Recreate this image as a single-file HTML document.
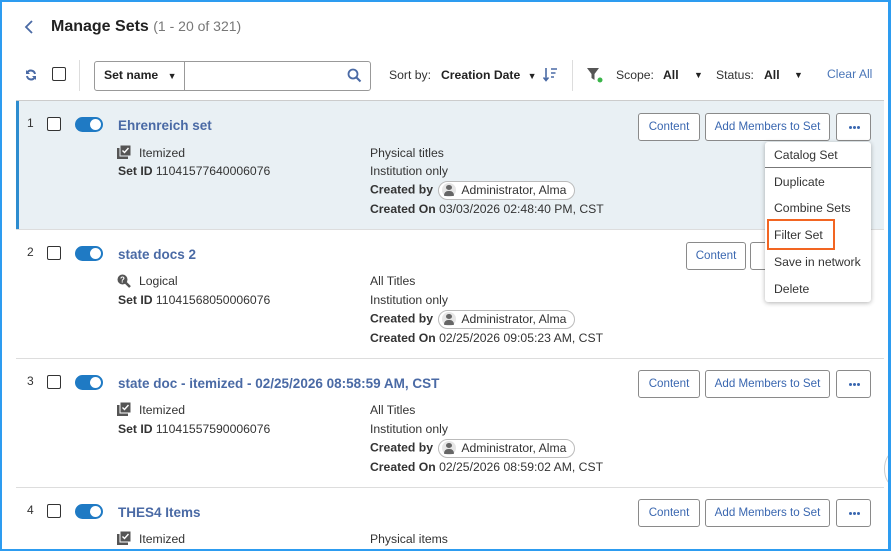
<!DOCTYPE html>
<html><head><meta charset="utf-8"><style>
*{box-sizing:border-box;margin:0;padding:0}
body{width:891px;height:551px;overflow:hidden;background:#fff;font-family:"Liberation Sans",Arial,sans-serif;font-size:12.2px;color:#333;position:relative}
.frame{position:absolute;left:0;top:0;width:891px;height:551px;border:2px solid #2d9cf0;border-right-width:3px;pointer-events:none;z-index:20}
.a{position:absolute;white-space:nowrap}
.cb{position:absolute;width:14px;height:14px;border:1.5px solid #333;border-radius:2px;background:#fff}
.tg{position:absolute;width:28px;height:15px;border-radius:8px;background:#1f7ac4}
.tg:after{content:"";position:absolute;right:2px;top:2px;width:11px;height:11px;border-radius:50%;background:#fff}
.btn{position:absolute;height:28px;border:1px solid #8a8a8a;border-radius:3px;background:#fff;color:#3a67b0;font-size:11.6px;line-height:26px;text-align:center}
.dots{font-size:0}
.dots:before{content:"";position:absolute;left:12px;top:12px;width:3px;height:3px;border-radius:50%;background:#3a67b0;box-shadow:4px 0 #3a67b0,8px 0 #3a67b0}
.title{position:absolute;color:#4a6aa5;font-size:13.5px;font-weight:bold;white-space:nowrap}
.b{font-weight:bold}
.pill{display:inline-block;border:1px solid #bbb;border-radius:10px;height:19px;line-height:17px;padding:0 8px 0 3px;background:#fff;vertical-align:middle;margin-left:2px}
.pill i{display:inline-block;width:14px;height:14px;border-radius:50%;background:#e6e6e6;vertical-align:-3px;margin-right:5px;position:relative}
.pill i:before{content:"";position:absolute;left:4px;top:2px;width:6px;height:5px;border-radius:50%;background:#666}
.pill i:after{content:"";position:absolute;left:2px;top:8px;width:10px;height:5px;border-radius:5px 5px 1px 1px;background:#666}
.hr{position:absolute;left:16px;width:868px;height:1px;background:#ddd}
.menu{position:absolute;left:765px;top:142px;width:106px;height:160px;background:#fff;box-shadow:0 1px 5px rgba(0,0,0,.3);border-radius:3px;z-index:10}
.menu div{position:absolute;left:9px;font-size:12.2px;color:#333}
</style></head><body>
<div class="frame"></div>
<svg class="a" style="left:24px;top:20px" width="10" height="14" viewBox="0 0 10 14"><path d="M8 1 L2 7 L8 13" fill="none" stroke="#4a6aa5" stroke-width="1.8"/></svg>
<div class="a" style="left:51px;top:18px;font-size:16px;color:#222"><span style="font-weight:bold">Manage Sets</span> <span style="color:#777;font-size:14px">(1 - 20 of 321)</span></div>
<svg class="a" style="left:25px;top:69px" width="12" height="12" viewBox="0 0 12 12"><path d="M10 5 A4.2 4.2 0 0 0 2.3 3.5 M2 7 A4.2 4.2 0 0 0 9.7 8.5" fill="none" stroke="#4a6aa5" stroke-width="2"/><path d="M1 1 L1 5 L5 5Z M11 11 L11 7 L7 7Z" fill="#4a6aa5"/></svg>
<div class="cb" style="left:52px;top:67px"></div>
<div class="a" style="left:79px;top:60px;width:1px;height:31px;background:#ddd"></div>
<div class="a" style="left:94px;top:61px;width:91px;height:30px;border:1px solid #999;border-radius:3px 0 0 3px"></div>
<div class="a b" style="left:104px;top:68px;color:#222">Set name <span style="font-size:9px;margin-left:6px">▼</span></div>
<div class="a" style="left:184px;top:61px;width:187px;height:30px;border:1px solid #999;border-radius:0 3px 3px 0"></div>
<svg class="a" style="left:347px;top:68px" width="15" height="15" viewBox="0 0 15 15"><circle cx="6" cy="6" r="4.5" fill="none" stroke="#4a6aa5" stroke-width="1.8"/><path d="M9.5 9.5 L13.5 13.5" stroke="#4a6aa5" stroke-width="2"/></svg>
<div class="a" style="left:389px;top:68px;color:#333">Sort by:</div>
<div class="a b" style="left:441px;top:68px;color:#222">Creation Date <span style="font-size:9px;margin-left:4px">▼</span></div>
<svg class="a" style="left:543px;top:67px" width="15" height="15" viewBox="0 0 15 15"><path d="M3 1 V13 M0.5 10.5 L3 13.5 L5.5 10.5" fill="none" stroke="#4a6aa5" stroke-width="1.6"/><path d="M8 2 H14 M8 6 H12.5 M8 10 H11" stroke="#4a6aa5" stroke-width="1.6"/></svg>
<div class="a" style="left:572px;top:60px;width:1px;height:31px;background:#ddd"></div>
<svg class="a" style="left:587px;top:68px" width="16" height="15" viewBox="0 0 16 15"><path d="M0 0 H12 L7.5 6 V12 L4.5 10 V6Z" fill="#555"/><circle cx="13" cy="12" r="2.5" fill="#3bb54a"/></svg>
<div class="a" style="left:616px;top:68px">Scope:</div>
<div class="a b" style="left:663px;top:68px;color:#222">All</div>
<div class="a" style="left:694px;top:70px;font-size:9px;color:#222">▼</div>
<div class="a" style="left:716px;top:68px">Status:</div>
<div class="a b" style="left:764px;top:68px;color:#222">All</div>
<div class="a" style="left:794px;top:70px;font-size:9px;color:#222">▼</div>
<div class="a" style="left:827px;top:67px;color:#4a76b8">Clear All</div>
<div class="hr" style="top:100px;background:#ccc"></div>

<div class="a" style="left:16px;top:101px;width:868px;height:128px;background:#e9f0f4"></div>
<div class="a" style="left:16px;top:101px;width:3px;height:128px;background:#2d8ccf"></div>
<div class="a" style="left:27px;top:116px;font-size:12px">1</div>
<div class="cb" style="left:47px;top:117px"></div>
<div class="tg" style="left:75px;top:117px"></div>
<div class="title" style="left:118px;top:118px">Ehrenreich set</div>
<svg class="a" style="left:117px;top:145px" width="14" height="14" viewBox="0 0 14 14"><rect x="0" y="3" width="11" height="11" fill="#555"/><rect x="3" y="0" width="11" height="11" fill="#555" stroke="#e9f0f4" stroke-width="1"/><path d="M5.5 5.5 L7.5 7.5 L11.5 3" fill="none" stroke="#fff" stroke-width="1.4"/></svg>
<div class="a" style="left:139px;top:146px">Itemized</div>
<div class="a" style="left:118px;top:164px"><span class="b">Set ID</span> 11041577640006076</div>
<div class="a" style="left:370px;top:146px">Physical titles</div>
<div class="a" style="left:370px;top:164px">Institution only</div>
<div class="a" style="left:370px;top:181px"><span class="b">Created by</span> <span class="pill"><i></i>Administrator, Alma</span></div>
<div class="a" style="left:370px;top:202px"><span class="b">Created On</span> 03/03/2026 02:48:40 PM, CST</div>
<div class="btn" style="left:638px;top:113px;width:62px">Content</div>
<div class="btn" style="left:705px;top:113px;width:125px">Add Members to Set</div>
<div class="btn dots" style="left:836px;top:113px;width:35px">.</div>
<div class="hr" style="top:229px"></div>

<div class="a" style="left:27px;top:245px;font-size:12px">2</div>
<div class="cb" style="left:47px;top:246px"></div>
<div class="tg" style="left:75px;top:246px"></div>
<div class="title" style="left:118px;top:247px">state docs 2</div>
<svg class="a" style="left:117px;top:274px" width="14" height="14" viewBox="0 0 14 14"><circle cx="5.5" cy="5.5" r="5" fill="#555"/><path d="M8.5 8.5 L13 13" stroke="#555" stroke-width="2.5"/><text x="5.5" y="8.5" font-size="8" fill="#fff" text-anchor="middle" font-family="Liberation Sans" font-weight="bold">?</text></svg>
<div class="a" style="left:139px;top:274px">Logical</div>
<div class="a" style="left:118px;top:293px"><span class="b">Set ID</span> 11041568050006076</div>
<div class="a" style="left:370px;top:274px">All Titles</div>
<div class="a" style="left:370px;top:293px">Institution only</div>
<div class="a" style="left:370px;top:310px"><span class="b">Created by</span> <span class="pill"><i></i>Administrator, Alma</span></div>
<div class="a" style="left:370px;top:331px"><span class="b">Created On</span> 02/25/2026 09:05:23 AM, CST</div>
<div class="btn" style="left:686px;top:242px;width:60px">Content</div>
<div class="btn" style="left:750px;top:242px;width:60px">C</div>
<div class="hr" style="top:358px"></div>

<div class="a" style="left:27px;top:374px;font-size:12px">3</div>
<div class="cb" style="left:47px;top:375px"></div>
<div class="tg" style="left:75px;top:375px"></div>
<div class="title" style="left:118px;top:376px">state doc - itemized - 02/25/2026 08:58:59 AM, CST</div>
<svg class="a" style="left:117px;top:402px" width="14" height="14" viewBox="0 0 14 14"><rect x="0" y="3" width="11" height="11" fill="#555"/><rect x="3" y="0" width="11" height="11" fill="#555" stroke="#fff" stroke-width="1"/><path d="M5.5 5.5 L7.5 7.5 L11.5 3" fill="none" stroke="#fff" stroke-width="1.4"/></svg>
<div class="a" style="left:139px;top:403px">Itemized</div>
<div class="a" style="left:118px;top:422px"><span class="b">Set ID</span> 11041557590006076</div>
<div class="a" style="left:370px;top:403px">All Titles</div>
<div class="a" style="left:370px;top:422px">Institution only</div>
<div class="a" style="left:370px;top:439px"><span class="b">Created by</span> <span class="pill"><i></i>Administrator, Alma</span></div>
<div class="a" style="left:370px;top:460px"><span class="b">Created On</span> 02/25/2026 08:59:02 AM, CST</div>
<div class="btn" style="left:638px;top:370px;width:62px">Content</div>
<div class="btn" style="left:705px;top:370px;width:125px">Add Members to Set</div>
<div class="btn dots" style="left:836px;top:370px;width:35px">.</div>
<div class="a" style="left:884px;top:452px;width:20px;height:34px;border:1px solid #ccc;border-radius:50%;background:#fff"></div>
<div class="hr" style="top:487px"></div>

<div class="a" style="left:27px;top:503px;font-size:12px">4</div>
<div class="cb" style="left:47px;top:504px"></div>
<div class="tg" style="left:75px;top:504px"></div>
<div class="title" style="left:118px;top:505px">THES4 Items</div>
<svg class="a" style="left:117px;top:531px" width="14" height="14" viewBox="0 0 14 14"><rect x="0" y="3" width="11" height="11" fill="#555"/><rect x="3" y="0" width="11" height="11" fill="#555" stroke="#fff" stroke-width="1"/><path d="M5.5 5.5 L7.5 7.5 L11.5 3" fill="none" stroke="#fff" stroke-width="1.4"/></svg>
<div class="a" style="left:139px;top:532px">Itemized</div>
<div class="a" style="left:370px;top:532px">Physical items</div>
<div class="btn" style="left:638px;top:499px;width:62px">Content</div>
<div class="btn" style="left:705px;top:499px;width:125px">Add Members to Set</div>
<div class="btn dots" style="left:836px;top:499px;width:35px">.</div>

<div class="menu">
<div style="top:6px">Catalog Set</div>
<span style="position:absolute;left:0;top:25px;width:106px;height:1px;background:#777"></span>
<div style="top:33px">Duplicate</div>
<div style="top:59px">Combine Sets</div>
<div style="top:86px">Filter Set</div>
<span style="position:absolute;left:2px;top:77px;width:68px;height:31px;border:2px solid #f26522"></span>
<div style="top:113px">Save in network</div>
<div style="top:140px">Delete</div>
</div>
</body></html>
